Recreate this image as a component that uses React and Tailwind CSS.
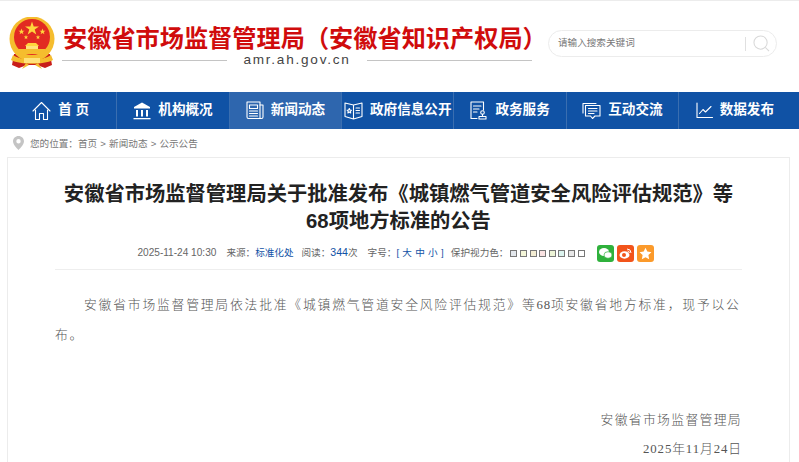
import React from "react";

const sans = "font-['Liberation_Sans','Noto_Sans_CJK_SC',sans-serif]";

function Emblem() {
  return (
    <svg width="50" height="54" viewBox="0 0 50 54" className="shrink-0">
      <path d="M7 37 L5 48 L12 51 L20 48 H30 L38 51 L45 48 L43 37 Z" fill="#c81e1a" />
      <circle cx="25" cy="22" r="22.500" fill="#f5bd2e" />
      <circle cx="25" cy="20" r="18" fill="#e22a22" />
      <path d="M25 4.500 l1.700 5 5.300 0 -4.300 3.100 1.600 5 -4.300-3.100 -4.300 3.100 1.600-5 -4.300-3.100 5.300 0z" fill="#ffd53d" />
      <path d="M14.500 11.500 l.8 2.200 2.300 0 -1.900 1.400 .7 2.200 -1.900-1.400 -1.900 1.400 .7-2.200 -1.900-1.400 2.300 0z M35.500 11.500 l.8 2.200 2.300 0 -1.900 1.400 .7 2.200 -1.900-1.400 -1.900 1.400 .7-2.200 -1.900-1.400 2.300 0z" fill="#ffd53d" />
      <path d="M19 18 l.6 1.600 1.700 0 -1.400 1 .5 1.600 -1.400-1 -1.400 1 .5-1.600 -1.400-1 1.700 0z M31 18 l.6 1.600 1.700 0 -1.400 1 .5 1.600 -1.400-1 -1.400 1 .5-1.600 -1.400-1 1.700 0z" fill="#ffd53d" />
      <path d="M18 29 L21 26 H29 L32 29 Z" fill="#ffd53d" />
      <rect x="19" y="29" width="12" height="3" fill="#ffe27a" />
      <path d="M8 37 H42 L38 32 H12 Z" fill="#f5bd2e" />
      <path d="M6 38 C14 44 36 44 44 38 L46 43 C36 48 14 48 4 43 Z" fill="#f5bd2e" />
      <path d="M17 41 H33 V46 H17 Z" fill="#ffe27a" />
      <path d="M19 46 L15 52 L22 48 Z M31 46 L35 52 L28 48 Z" fill="#f5bd2e" />
    </svg>
  );
}

const stroke = { fill: "none", stroke: "#fff", strokeWidth: 1.1, strokeLinejoin: "round", strokeLinecap: "round" };

const icons = {
  home: (
    <svg width="19" height="20" viewBox="0 0 19 20" {...stroke}>
      <path d="M1 10 L9.500 1.500 L18 10" />
      <path d="M3.500 9 V18.500 H7.500 V12.500 H11.500 V18.500 H15.500 V9" />
    </svg>
  ),
  bank: (
    <svg width="18" height="18" viewBox="0 0 18 18" fill="#fff">
      <path d="M9 .5 L17 5 V6.500 H1 V5 Z" />
      <rect x="3" y="8" width="2" height="6.500" />
      <rect x="8" y="8" width="2" height="6.500" />
      <rect x="13" y="8" width="2" height="6.500" />
      <rect x=".5" y="16" width="17" height="1.300" />
    </svg>
  ),
  news: (
    <svg width="18" height="19" viewBox="0 0 18 19" {...stroke}>
      <path d="M1 1 H14 V17.500 H2.500 Q1 17.500 1 16 Z" />
      <path d="M14 4 H17 V16 Q17 17.500 15.500 17.500 H13" />
      <path d="M3.500 4 H11.500 V7.500 H3.500 Z M3.500 10 H11.500 M3.500 12.500 H11.500 M3.500 15 H11.500" />
    </svg>
  ),
  book: (
    <svg width="19" height="18" viewBox="0 0 19 18" {...stroke}>
      <path d="M9.500 3 L1 1 V14.500 L9.500 17 L18 14.500 V1 Z M9.500 3 V17" />
      <path d="M12 6 H15.500 M12 8.500 H15.500 M12 11 H15.500" />
      <path d="M5.300 6.500 l.7 1.500 1.500.2 -1.100 1.100 .3 1.600 -1.400-.8 -1.400.8 .3-1.600 -1.100-1.100 1.500-.2z" />
    </svg>
  ),
  doc: (
    <svg width="18" height="19" viewBox="0 0 18 19" {...stroke}>
      <path d="M7 17.500 H1 V1 H13.500 V9" />
      <path d="M3.500 5 H11 M3.500 8 H9 M3.500 11 H7" />
      <circle cx="12.500" cy="11.500" r="1.800" />
      <path d="M12.500 13.300 V15 M9 15.500 H16 V18 H9 Z" />
    </svg>
  ),
  chat: (
    <svg width="19" height="18" viewBox="0 0 19 18" {...stroke}>
      <path d="M1 11 V1.500 H14" />
      <path d="M3.500 3.500 H18 V14 H13 L10.500 16.500 L8.500 14 H3.500 Z" />
      <path d="M6.500 6.500 H15 M6.500 9 H15 M6.500 11.500 H12" />
    </svg>
  ),
  chart: (
    <svg width="17" height="17" viewBox="0 0 17 17" {...stroke}>
      <path d="M1 1 V15.500 H16.500" />
      <path d="M3.500 11.500 L7 7.500 L9.500 10 L15 4.500" />
    </svg>
  ),
};

const nav = [
  ["home", "首 页"],
  ["bank", "机构概况"],
  ["news", "新闻动态", true],
  ["book", "政府信息公开"],
  ["doc", "政务服务"],
  ["chat", "互动交流"],
  ["chart", "数据发布"],
];

const swatches = ["#e3e7ec", "#f3f5d8", "#f2ecd2", "#fae3e3", "#ecf3d6", "#dcf3ee", "#e7e7e7", "#ffffff"];

export default function App() {
  return (
    <div className={`h-[462px] w-[799px] overflow-hidden bg-white ${sans}`}>
      <header className="h-[92px] border-t border-[#ececec] flex">
        <div className="ml-[7px] mt-[16px]">
          <Emblem />
        </div>
        <div className="ml-[6px] mt-[21px] w-[480px]">
          <div className="text-[24.2px] leading-[34px] font-bold text-[#d00c0c] whitespace-nowrap">
            安徽省市场监督管理局（安徽省知识产权局）
          </div>
          <div className="flex items-center w-[470px] -mt-[4px] -ml-[1px]">
            <div className="h-px w-[165px] bg-[#c4c4c4]" />
            <div className="flex-1 text-center text-[13.6px] leading-[16px] tracking-[1.75px] text-[#444]">amr.ah.gov.cn</div>
            <div className="h-px w-[165px] bg-[#c4c4c4]" />
          </div>
        </div>
        <div className="ml-[5px] mt-[29px] w-[229px] h-[27px] rounded-full border border-[#ececec] flex items-center pl-[9px] pr-[6px]">
          <span className="flex-1 text-[9.6px] text-[#777]">请输入搜索关键词</span>
          <span className="w-px h-[14px] bg-[#e0e0e0] mr-[7px]" />
          <svg width="17" height="17" viewBox="0 0 18 18" fill="none" stroke="#d8d8d8" strokeWidth="1.100">
            <circle cx="8" cy="8" r="7" />
            <path d="M13 13 L17 17" />
          </svg>
        </div>
      </header>

      <nav className="h-[37px] bg-[#1052a5]">
        <div className="flex h-full w-[785.5px] ml-[5px]">
          {nav.map(([icon, label, active], i) => (
            <div
              key={label}
              className={`flex-1 min-w-0 flex items-center justify-center gap-[7px] whitespace-nowrap text-white font-bold text-[13.6px] ${
                i < 6 ? "border-r border-[#3a6eb0]" : ""
              } ${active ? "bg-[#2e66ae]" : ""}`}
            >
              <span className="shrink-0 flex">{icons[icon]}</span>
              <span>{label}</span>
            </div>
          ))}
        </div>
      </nav>

      <div className="h-[28px] flex items-center pl-[13px] text-[9.6px] text-[#777]">
        <svg width="11" height="14" viewBox="0 0 11 14" className="mr-[6px]">
          <path d="M5.500 0 C2.400 0 0 2.400 0 5.300 C0 9 5.500 14 5.500 14 S11 9 11 5.300 C11 2.400 8.600 0 5.500 0 Z M5.500 7.500 A2.200 2.200 0 1 1 5.500 3.100 A2.200 2.200 0 0 1 5.500 7.500 Z" fill="#c4c4c4" fillRule="evenodd" />
        </svg>
        <span className="pt-[2px]">
          您的位置：首页 <span className="mx-[0.5px]">&gt;</span> 新闻动态 <span className="mx-[0.5px]">&gt;</span> 公示公告
        </span>
      </div>

      <main className="ml-[7px] w-[783px] h-[320px] border border-[#ececec] px-[47px]">
        <h1 className="mt-[23px] text-center text-[20.3px] leading-[27px] font-bold text-[#222]">
          安徽省市场监督管理局关于批准发布《城镇燃气管道安全风险评估规范》等
          <br />
          68项地方标准的公告
        </h1>
        <div className="mt-[8px] h-[27px] flex items-center justify-center border-b border-[#eeeeee] pb-[6px] pr-[6px] text-[9.6px] text-[#666] whitespace-nowrap">
          <span className="text-[10.1px]">2025-11-24 10:30</span>
          <span className="ml-[10px]">来源：</span>
          <span className="text-[#1052a5]">标准化处</span>
          <span className="ml-[8px]">阅读：</span>
          <span className="text-[#1052a5] text-[10.6px]">344</span>
          <span>次</span>
          <span className="ml-[10px]">字号：</span>
          <span className="text-[#1052a5] tracking-[0.3px]">[ 大 中 小 ]</span>
          <span className="ml-[7px]">保护视力色：</span>
          <span className="flex gap-[2.6px] ml-[2px]">
            {swatches.map((c, i) => (
              <span key={i} className="w-[7px] h-[7px] border border-[#777]" style={{ backgroundColor: c }} />
            ))}
          </span>
          <span className="flex gap-[3px] ml-[12px]">
            <span className="w-[17px] h-[17px] rounded-[3px] bg-[#2fb13c] flex items-center justify-center">
              <svg width="13" height="11" viewBox="0 0 13 11" fill="#fff">
                <ellipse cx="5" cy="4" rx="5" ry="4" />
                <ellipse cx="9" cy="7" rx="4" ry="3.300" stroke="#2fb13c" strokeWidth=".7" />
              </svg>
            </span>
            <span className="w-[17px] h-[17px] rounded-[3px] bg-[#f2541b] flex items-center justify-center">
              <svg width="13" height="11" viewBox="0 0 13 11">
                <ellipse cx="5.500" cy="7" rx="5" ry="3.700" fill="#fff" />
                <circle cx="5" cy="7" r="2" fill="#f2541b" />
                <path d="M8 1 Q12 1 12 5 M8.500 3 Q10.300 3 10.300 5" fill="none" stroke="#fff" strokeWidth="1" />
              </svg>
            </span>
            <span className="w-[17px] h-[17px] rounded-[3px] bg-[#fb9a2b] flex items-center justify-center">
              <svg width="13" height="13" viewBox="0 0 24 24" fill="#fff">
                <path d="M12 1.500 L15.300 8.500 L23 9.500 L17.300 14.800 L18.800 22.500 L12 18.700 L5.200 22.500 L6.700 14.800 L1 9.500 L8.700 8.500 Z" />
              </svg>
            </span>
          </span>
        </div>
        <div className="font-['Liberation_Serif','Noto_Sans_CJK_SC',serif] font-light text-[12.8px] text-[#555] leading-[30px] tracking-[1.8px]">
          <p className="mt-[20px] indent-[29px]">
            安徽省市场监督管理局依法批准《城镇燃气管道安全风险评估规范》等<span className="tracking-[0.8px]">68</span>项安徽省地方标准，现予以公布。
          </p>
          <p className="mt-[55px] text-right tracking-[1.35px]">安徽省市场监督管理局</p>
          <p className="text-right tracking-[0.9px] -mt-[1px]">2025年11月24日</p>
        </div>
      </main>
    </div>
  );
}
